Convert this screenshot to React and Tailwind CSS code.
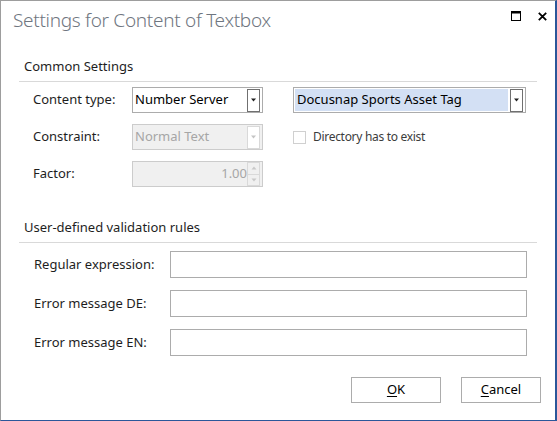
import React from "react";

const FONT = "font-['Segoe_UI','Noto_Sans','Open_Sans',sans-serif]";

function DropButton({ disabled }) {
  return (
    <div
      className={`w-[13px] h-[23px] bg-white border flex items-center justify-center ${
        disabled ? "border-[#d9d9d9]" : "border-[#707070]"
      }`}
    >
      <svg width="6" height="4" viewBox="0 0 6 4">
        <path d="M0 0.5 L5 0.5 L2.5 3.5 Z" fill={disabled ? "#c4c4c4" : "#222"} />
      </svg>
    </div>
  );
}

function Spinner() {
  return (
    <div className="w-[13px] h-[24px] flex flex-col">
      <div className="flex-1 border border-[#d9d9d9] flex items-center justify-center">
        <svg width="6" height="4" viewBox="0 0 6 4">
          <path d="M0.5 3.5 L5.5 3.5 L3 0.5 Z" fill="#c8c8c8" />
        </svg>
      </div>
      <div className="flex-1 border border-t-0 border-[#d9d9d9] flex items-center justify-center">
        <svg width="6" height="4" viewBox="0 0 6 4">
          <path d="M0.5 0.5 L5.5 0.5 L3 3.5 Z" fill="#c8c8c8" />
        </svg>
      </div>
    </div>
  );
}

function SectionHeader({ children }) {
  return (
    <div className="mx-[18px] border-b border-[#d9d9d9] pl-[5px] h-[26px] flex items-end pb-[5px] text-[13px] text-[#1e1e1e]">
      {children}
    </div>
  );
}

export default function App() {
  return (
    <div
      className={`${FONT} w-[557px] h-[421px] bg-white border-l border-t border-[#9d9d9d] border-r-2 border-r-[#2b579a] border-b border-b-[#2b579a] flex flex-col`}
    >
      {/* title bar */}
      <div className="h-[55px] flex items-start justify-between">
        <div className="pl-[12px] pt-[5px] text-[19px] font-light text-[#6f7680] tracking-[-0.3px]">
          Settings for Content of Textbox
        </div>
        <div className="flex items-center gap-[17px] pt-[10px] pr-[8px]">
          <svg width="10" height="10" viewBox="0 0 10 10">
            <rect x="0.5" y="0.5" width="9" height="9" fill="none" stroke="#000" />
            <rect x="0" y="0" width="10" height="2.5" fill="#000" />
          </svg>
          <svg width="9" height="9" viewBox="0 0 9 9">
            <path d="M0.8 0.8 L8.2 8.2 M8.2 0.8 L0.8 8.2" stroke="#000" strokeWidth="1.8" />
          </svg>
        </div>
      </div>

      <SectionHeader>Common Settings</SectionHeader>

      <div className="pl-[32px] pt-[5px] flex flex-col gap-[11px] text-[13px]">
        <div className="flex items-center h-[26px]">
          <div className="w-[99px] text-[#1e1e1e]">Content type:</div>
          <div className="w-[131px] h-[26px] border border-[#acacac] bg-white flex items-center justify-between pl-[2px] pr-[2px]">
            <span className="text-[#000]">Number Server</span>
            <DropButton />
          </div>
          <div className="ml-[30px] w-[233px] h-[26px] border border-[#acacac] bg-white flex items-center p-[1px]">
            <div className="flex-1 h-full bg-[#d3e0f4] flex items-center pl-[2px] text-[#000]">
              Docusnap Sports Asset Tag
            </div>
            <div className="ml-[2px] mr-[1px]">
              <DropButton />
            </div>
          </div>
        </div>

        <div className="flex items-center h-[26px]">
          <div className="w-[99px] text-[#1e1e1e]">Constraint:</div>
          <div className="w-[131px] h-[26px] border border-[#cccccc] bg-[#f0f0f0] flex items-center justify-between pl-[2px] pr-[2px]">
            <span className="text-[#a6a6a6]">Normal Text</span>
            <DropButton disabled />
          </div>
          <div className="ml-[30px] flex items-center gap-[7px]">
            <div className="w-[13px] h-[13px] border border-[#d0d0d0] bg-white" />
            <span className="text-[#3c3c3c] text-[12px] tracking-[-0.3px]">Directory has to exist</span>
          </div>
        </div>

        <div className="flex items-center h-[26px]">
          <div className="w-[99px] text-[#1e1e1e]">Factor:</div>
          <div className="w-[131px] h-[26px] border border-[#cccccc] bg-[#f0f0f0] flex items-center justify-end pr-[2px]">
            <span className="text-[#a6a6a6]">1.00</span>
            <Spinner />
          </div>
        </div>
      </div>

      <div className="mt-[30px]">
        <SectionHeader>User-defined validation rules</SectionHeader>
      </div>

      <div className="pl-[33px] pt-[8px] flex flex-col gap-[12px] text-[13px]">
        {["Regular expression:", "Error message DE:", "Error message EN:"].map((l) => (
          <div key={l} className="flex items-center h-[27px]">
            <div className="w-[136px] text-[#1e1e1e]">{l}</div>
            <div className="w-[357px] h-[27px] border border-[#acacac] bg-white" />
          </div>
        ))}
      </div>

      <div className="mt-auto mb-[17px] flex justify-end gap-[20px] pr-[14px] text-[13px]">
        <button className="w-[90px] h-[26px] border border-[#acacac] bg-white text-[#000]">
          <span className="underline underline-offset-2">O</span>K
        </button>
        <button className="w-[80px] h-[26px] border border-[#acacac] bg-white text-[#000]">
          <span className="underline underline-offset-2">C</span>ancel
        </button>
      </div>
    </div>
  );
}
